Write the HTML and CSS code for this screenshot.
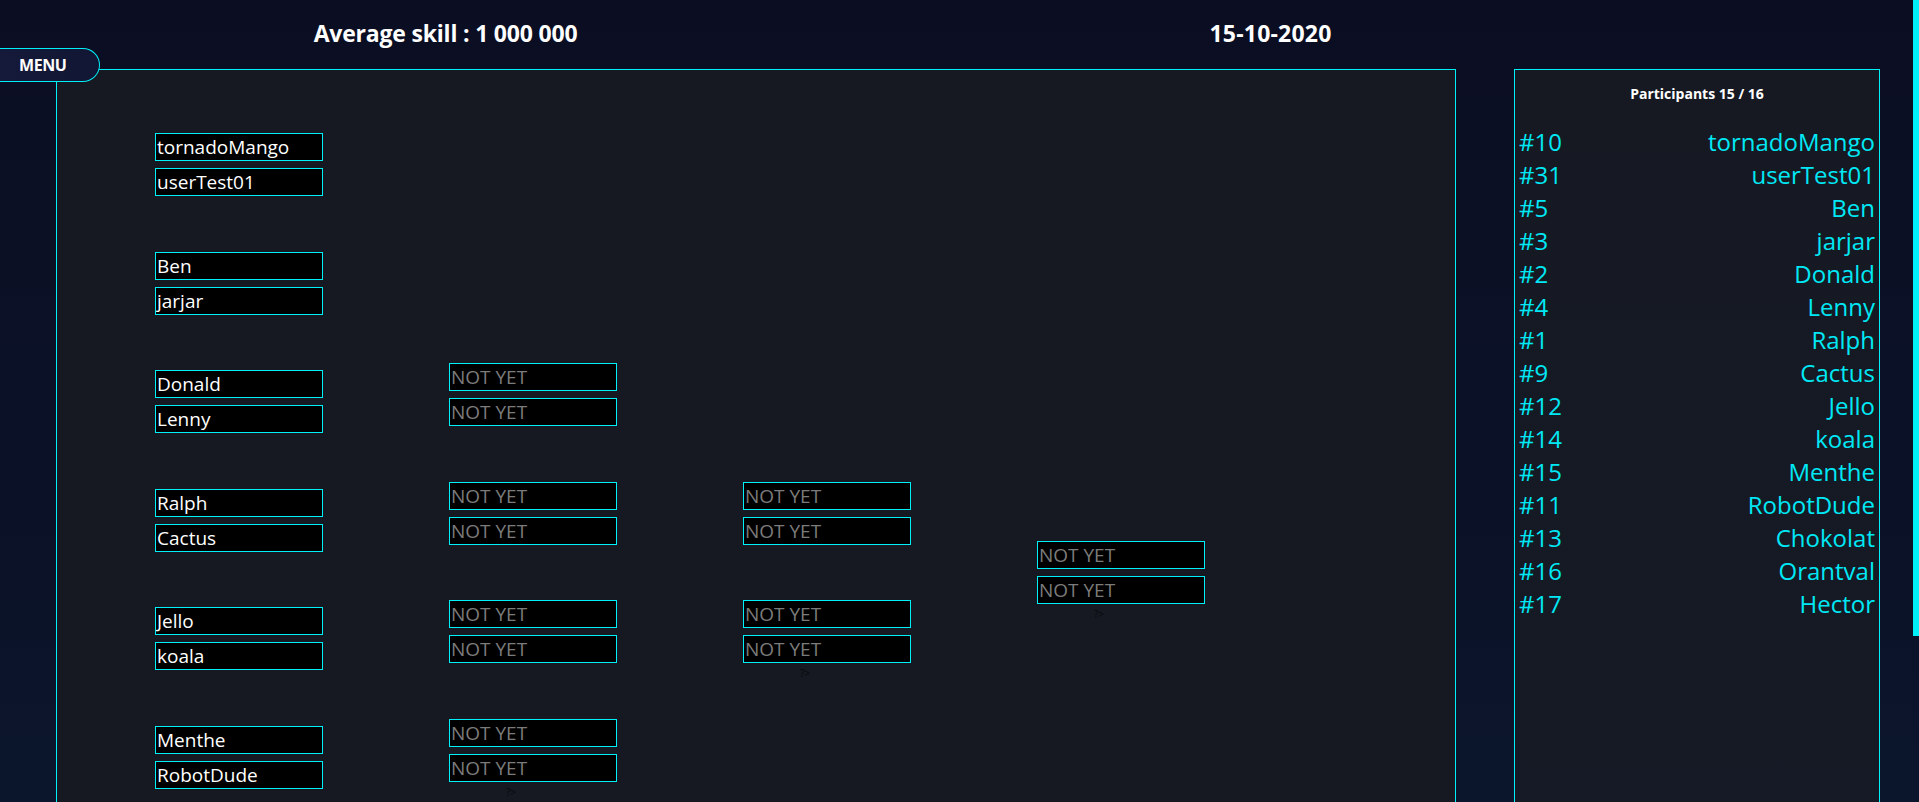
FILE: index.html
```html
<!DOCTYPE html>
<html lang="en">
<head>
<meta charset="utf-8">
<title>Tournament</title>
<link rel="stylesheet" href="styles.css">
</head>
<body>
<div class="page">
  <header class="topbar">
    <div class="cell">Average skill : 1 000 000</div>
    <div class="cell date">15-10-2020</div>
  </header>
  <div class="content">
    <div class="menu">MENU</div>
    <main class="board">
      <div class="bracket">
        <div class="round">
          <div class="match"><div class="slot">tornadoMango</div><div class="slot">userTest01</div></div>
          <div class="match"><div class="slot">Ben</div><div class="slot">jarjar</div></div>
          <div class="match"><div class="slot">Donald</div><div class="slot">Lenny</div></div>
          <div class="match"><div class="slot">Ralph</div><div class="slot">Cactus</div></div>
          <div class="match"><div class="slot">Jello</div><div class="slot">koala</div></div>
          <div class="match"><div class="slot">Menthe</div><div class="slot">RobotDude</div></div>
          <div class="match"><div class="slot">Chokolat</div><div class="slot">Orantval</div></div>
          <div class="match"><div class="slot">Hector</div><div class="slot pending">NOT YET</div></div>
        </div>
        <div class="round">
          <div class="match"><div class="slot pending">NOT YET</div><div class="slot pending">NOT YET</div></div>
          <div class="match"><div class="slot pending">NOT YET</div><div class="slot pending">NOT YET</div></div>
          <div class="match"><div class="slot pending">NOT YET</div><div class="slot pending">NOT YET</div></div>
          <div class="match"><div class="slot pending">NOT YET</div><div class="slot pending">NOT YET</div></div>
          <div class="php">?&gt;</div>
        </div>
        <div class="round">
          <div class="match"><div class="slot pending">NOT YET</div><div class="slot pending">NOT YET</div></div>
          <div class="match"><div class="slot pending">NOT YET</div><div class="slot pending">NOT YET</div></div>
          <div class="php">?&gt;</div>
        </div>
        <div class="round">
          <div class="match"><div class="slot pending">NOT YET</div><div class="slot pending">NOT YET</div></div>
          <div class="php">?&gt;</div>
        </div>
      </div>
    </main>
    <aside class="sidebar">
      <h2 class="count">Participants 15 / 16</h2>
      <ul class="players">
        <li><span>#10</span><span>tornadoMango</span></li>
        <li><span>#31</span><span>userTest01</span></li>
        <li><span>#5</span><span>Ben</span></li>
        <li><span>#3</span><span>jarjar</span></li>
        <li><span>#2</span><span>Donald</span></li>
        <li><span>#4</span><span>Lenny</span></li>
        <li><span>#1</span><span>Ralph</span></li>
        <li><span>#9</span><span>Cactus</span></li>
        <li><span>#12</span><span>Jello</span></li>
        <li><span>#14</span><span>koala</span></li>
        <li><span>#15</span><span>Menthe</span></li>
        <li><span>#11</span><span>RobotDude</span></li>
        <li><span>#13</span><span>Chokolat</span></li>
        <li><span>#16</span><span>Orantval</span></li>
        <li><span>#17</span><span>Hector</span></li>
      </ul>
    </aside>
  </div>
  <div class="scroll-thumb"></div>
</div>
</body>
</html>
```

FILE: styles.css
```css
html {
  background: linear-gradient(to bottom, #0b0e22 0%, #0b1329 60%, #0b1a32 100%);
  min-height: 100%;
}
body {
  margin: 0;
  font-family: "Open Sans", "DejaVu Sans", sans-serif;
  color: #ffffff;
}
.page {
  position: relative;
}
.topbar {
  display: flex;
  height: 69px;
  box-sizing: border-box;
  padding: 17px 0 0 33px;
}
.cell {
  width: 825px;
  text-align: center;
  font-size: 23px;
  font-weight: 700;
  line-height: 32px;
  letter-spacing: -0.2px;
}
.cell.date {
  letter-spacing: 0.2px;
}
.content {
  display: flex;
  align-items: stretch;
  padding-left: 56px;
  gap: 58px;
}
.menu {
  position: absolute;
  left: 0;
  top: 48px;
  width: 100px;
  height: 34px;
  box-sizing: border-box;
  border: 1px solid #00f0fa;
  border-left: none;
  border-radius: 0 17px 17px 0;
  background: linear-gradient(to right, #151a3a, #111634);
  font-size: 16px;
  font-weight: 700;
  line-height: 32px;
  padding-left: 19px;
  letter-spacing: -0.4px;
  z-index: 2;
}
.board {
  width: 1400px;
  box-sizing: border-box;
  border: 1px solid #00f0fa;
  background: #161922;
  padding: 63px 0 24px 98px;
}
.bracket {
  display: flex;
  align-items: center;
  gap: 126px;
}
.round {
  display: flex;
  flex-direction: column;
  gap: 55.5px;
  width: 168px;
}
.match {
  display: flex;
  flex-direction: column;
  gap: 7px;
}
.slot {
  height: 28px;
  box-sizing: border-box;
  border: 1px solid #00f0fa;
  background: #000000;
  color: #ffffff;
  font-size: 19px;
  line-height: 27px;
  padding-left: 1px;
  white-space: nowrap;
  overflow: hidden;
}
.slot.pending {
  color: #7b7b7b;
}
.php {
  height: 13.5px;
  margin-top: -55.5px;
  font-size: 10px;
  line-height: 20px;
  color: #06080c;
  padding-left: 57px;
}
.sidebar {
  width: 366px;
  box-sizing: border-box;
  border: 1px solid #00f0fa;
  background: linear-gradient(to bottom, #161922, #141a26);
  padding: 14px 4px 0 4px;
}
.count {
  margin: 0;
  text-align: center;
  font-size: 14px;
  font-weight: 700;
  line-height: 20px;
  letter-spacing: 0;
}
.players {
  list-style: none;
  margin: 21px 0 0 0;
  padding: 0;
  color: #00e8f5;
  font-size: 24px;
  line-height: 33px;
}
.players li {
  display: flex;
  justify-content: space-between;
}
.scroll-thumb {
  position: fixed;
  top: 0;
  right: 0;
  width: 6px;
  height: 636px;
  background: #00f0fa;
  z-index: 5;
}
```
